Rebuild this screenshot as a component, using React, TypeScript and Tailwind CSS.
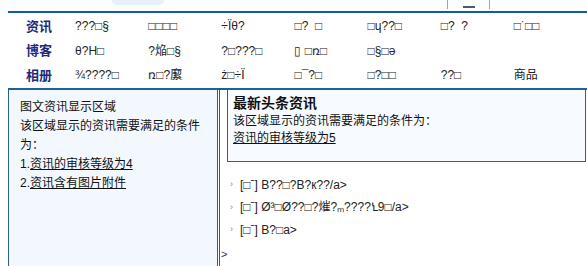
import React from 'react';

const cjk = "font-['Liberation_Sans','Noto_Sans_CJK_SC',sans-serif]";

const navRows: { label: string; cells: string[] }[] = [
  { label: '资讯', cells: ['???□§', '□□□□', '÷Ïθ?', '□?  □', '□ɥ??□', '□?  ?', '□˙□□'] },
  { label: '博客', cells: ['θ?H□', '?焔□§', '?□???□', '▯ □ռ□', '□§□ə', '', ''] },
  { label: '相册', cells: ['¾????□', 'ռ□?緳', 'ż□÷Ï', '□¯?□', '□?□□', '??□', '商品'] },
];

const items = ['B??□?B?к??/a>', 'Ø³□Ø??□?熣?ₘ????Ꝇ9□/a>', 'B?□a>'];

const NavRow = ({ label, cells }: { label: string; cells: string[] }) => (
  <div className="flex items-center h-[24.5px]">
    <div className="w-[69px] pl-[18px] text-[13px] font-bold text-[#1c2a7a]">{label}</div>
    {cells.map((c, i) => (
      <div key={i} className="w-[76px] text-[12px] text-[#222] whitespace-pre">
        {c}
      </div>
    ))}
  </div>
);

export default function App() {
  return (
    <div className={`w-[587px] h-[266px] overflow-hidden bg-white ${cjk}`}>
      {/* top strip */}
      <div className="h-[11px] flex bg-[#fbfdff]">
        <div className="ml-[112px] w-[52px] h-[5px] rounded-b-full bg-[#e6f1fa]" />
        <div className="ml-[283px] w-[43px] h-[9px] border-x border-[#9aa6b3] flex justify-center">
          <div className="w-[12px] h-[2px] mt-[6px] bg-[#4a5a70]" />
        </div>
      </div>
      <div className="ml-[8px] h-[2px] bg-[#1459a8]" />

      {/* nav */}
      <div className="ml-[8px] pt-[1px]">
        {navRows.map((r) => (
          <NavRow key={r.label} label={r.label} cells={r.cells} />
        ))}
      </div>
      <div className="ml-[8px] h-[2px] bg-[#1f5f9c]" />

      {/* body */}
      <div className="flex ml-[8px] h-[180px]">
        <div className="w-[210px] border-x border-[#2b5f91] bg-[#f3f8fe] pl-[11px] pt-[8px] text-[12px] leading-[19px] text-[#111]">
          <div>图文资讯显示区域</div>
          <div>该区域显示的资讯需要满足的条件</div>
          <div>为：</div>
          <div>
            1.<span className="underline">资讯的审核等级为4</span>
          </div>
          <div>
            2.<span className="underline">资讯含有图片附件</span>
          </div>
        </div>
        <div className="flex-1 ml-[1px] border-l border-[#2b5f91] pl-[7px] flex flex-col">
          <div className="mr-[1px] h-[72px] border-x border-b border-[#2b5f91] bg-[#f7fbff] px-[5px] pt-[3px] text-[#111]">
            <div className="text-[14px] font-bold leading-[20px]">最新头条资讯</div>
            <div className="text-[12px] leading-[17px]">该区域显示的资讯需要满足的条件为：</div>
            <div className="text-[12px] leading-[17px] underline">资讯的审核等级为5</div>
          </div>
          <div className="pt-[12px] pl-[3px] text-[12px] text-[#222]">
            {items.map((t, i) => (
              <div key={i} className="flex items-center h-[22.5px]">
                <span className="text-[9px] text-[#888] w-[10px]">›</span>
                <span className="whitespace-pre">[□ˉ] {t}</span>
              </div>
            ))}
          </div>
          <div className="-ml-[6px] mt-[5px] text-[11px] text-[#333]">&gt;</div>
        </div>
      </div>
    </div>
  );
}
